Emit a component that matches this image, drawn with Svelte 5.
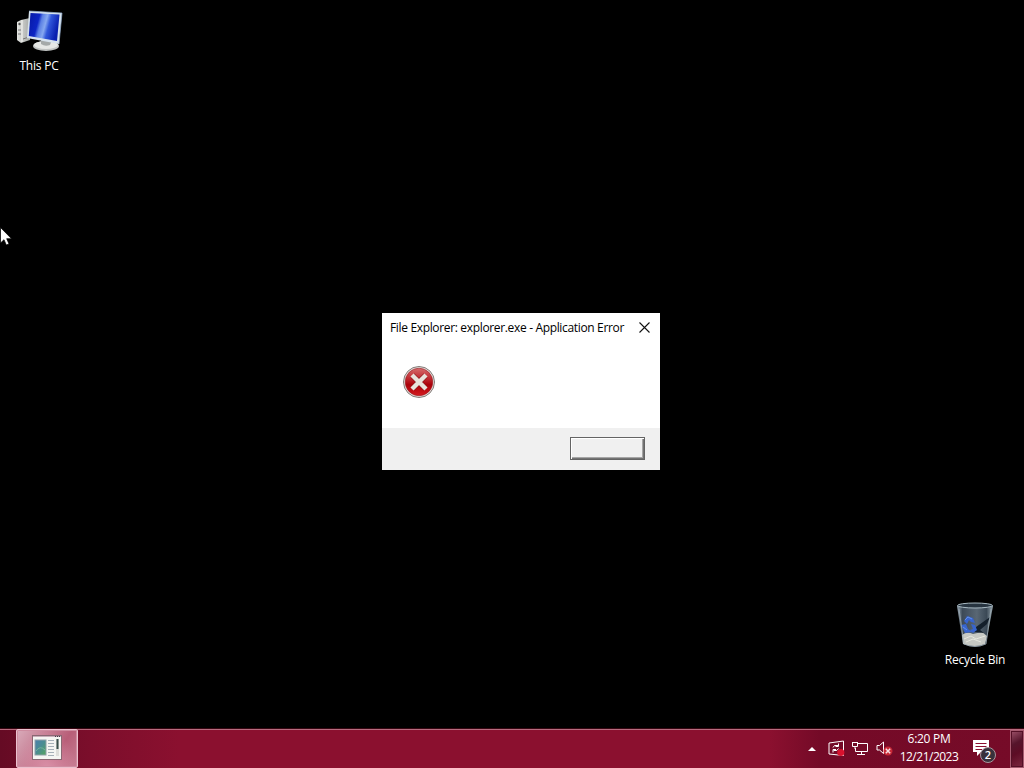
<script lang="ts">
	let dialogOpen = $state(true);

	const time = '6:20 PM';
	const date = '12/21/2023';
	const notifications = 2;
</script>

<main>
	<div class="desktop">
		<div class="shortcut pc">
			<svg width="48" height="44" viewBox="0 0 48 44">
				<defs>
					<linearGradient id="screen" x1="0" y1="0" x2="1" y2="0.25">
						<stop offset="0" stop-color="#0719a4" />
						<stop offset="0.35" stop-color="#0c25c4" />
						<stop offset="0.45" stop-color="#5b80e4" />
						<stop offset="0.6" stop-color="#86a8f0" />
						<stop offset="0.72" stop-color="#3157da" />
						<stop offset="1" stop-color="#0920b0" />
					</linearGradient>
					<linearGradient id="tower">
						<stop offset="0" stop-color="#e3e4e1" />
						<stop offset="1" stop-color="#a4a7a5" />
					</linearGradient>
				</defs>
				<path d="M2 14 L6 12 L15 10 V32 L6 35 L2 32Z" fill="url(#tower)" />
				<path d="M7 12 V34" stroke="#f8f8f5" />
				<path d="M3 22 L6 22 M3 26 L6 26 M8 31 L14 29" stroke="#777" />
				<circle cx="4.500" cy="16" r="1.200" fill="#555" />
				<ellipse cx="31" cy="38" rx="13" ry="5" fill="#bfc2c1" />
				<ellipse cx="31" cy="37" rx="12" ry="4" fill="#e5e7e5" />
				<path d="M26 31 L37 32 L35 37 Q30 39 26 36Z" fill="#a4a9a9" />
				<path d="M14 3 L47 5 L44 36 L12 30Z" fill="#d6e2ed" />
				<path d="M15.500 5 L44.500 6.500 L42 33 L13.800 28Z" fill="url(#screen)" />
				<path d="M14 3 L47 5 L44 36" fill="none" stroke="#91aacb" stroke-width="0.700" />
			</svg>
			<span>This PC</span>
		</div>

		<div class="shortcut bin">
			<svg width="48" height="48" viewBox="0 0 48 48">
				<defs>
					<linearGradient id="glass">
						<stop offset="0" stop-color="#9aa9b5" />
						<stop offset="0.15" stop-color="#3d4a58" />
						<stop offset="0.55" stop-color="#596774" />
						<stop offset="0.82" stop-color="#3b4956" />
						<stop offset="1" stop-color="#9aaab2" />
					</linearGradient>
				</defs>
				<path d="M6 5 L12 43 Q24 49 35 43 L42 5Z" fill="url(#glass)" />
				<path d="M11 34 Q16 30 22 33 L31 31 L36 35 L34 43 Q24 47 12 43Z" fill="#c7c9c4" />
				<path d="M13 38 L20 35 L25 38 L34 35 M15 41 L22 38 L30 41" fill="none" stroke="#e6e7df" />
				<path d="M25 26 L39 16 L36 23 L29 29 L33 32 L23 31Z" fill="#131f2b" />
				<path d="M13 20 L16 15 L22 17 L24 22 L20 21 L18 19 L16 23Z M10 24 L15 23 L17 28 L21 31 L14 32Z M20 23 L24 24 L26 29 L22 32 L19 29 L22 28Z" fill="#3764ce" />
				<path d="M14 19 L17 16 L21 18 M12 26 L16 29" fill="none" stroke="#6791e5" />
				<ellipse cx="24" cy="4.500" rx="17.500" ry="2.500" fill="#273440" stroke="#a9bac3" />
				<path d="M8 8 L13 43 Q24 48 35 43 L40 8" fill="none" stroke="#a5b1b9" stroke-width="0.700" />
			</svg>
			<span>Recycle Bin</span>
		</div>

		{#if dialogOpen}
			<section class="dialog">
				<header>
					<h1>File Explorer: explorer.exe - Application Error</h1>
					<button class="close" aria-label="Close" onclick={() => (dialogOpen = false)}>
						<svg width="11" height="11" viewBox="0 0 11 11">
							<path d="M.5 .5 L10.500 10.500 M10.500 .5 L.5 10.500" stroke="#111" stroke-width="1.100" />
						</svg>
					</button>
				</header>
				<div class="message">
					<svg width="34" height="34" viewBox="0 0 34 34">
						<defs>
							<linearGradient id="error" x1="0" y1="0" x2="0" y2="1">
								<stop offset="0" stop-color="#d56b6b" />
								<stop offset="0.42" stop-color="#bd2229" />
								<stop offset="0.6" stop-color="#aa0009" />
								<stop offset="1" stop-color="#d51b20" />
							</linearGradient>
						</defs>
						<circle cx="17" cy="17" r="15.500" fill="#e8e2df" stroke="#827b78" />
						<circle cx="17" cy="17" r="13.800" fill="url(#error)" stroke="#971a21" stroke-width="0.600" />
						<path d="M10.500 10.500 L23.500 23.500 M23.500 10.500 L10.500 23.500" stroke="#8e171b" stroke-width="5.600" />
						<path d="M10 10 L24 24 M24 10 L10 24" stroke="#e9e3dc" stroke-width="4.400" />
					</svg>
				</div>
				<footer>
					<button class="action" aria-label="OK" onclick={() => (dialogOpen = false)}></button>
				</footer>
			</section>
		{/if}

		<svg class="cursor" width="12" height="19" viewBox="0 0 12 19">
			<path d="M.5 .5 V16 L4 12.700 L6.300 18 L9 16.900 L6.700 11.700 H11.500Z" fill="#fff" stroke="#000" stroke-width="0.700" />
		</svg>
	</div>

	<div class="taskbar">
		<button class="task" aria-label="Application error">
			<svg width="30" height="25" viewBox="0 0 30 25">
				<defs>
					<linearGradient id="preview" x1="0" y1="0" x2="1" y2="1">
						<stop offset="0" stop-color="#4b80ad" />
						<stop offset="0.5" stop-color="#4a8c91" />
						<stop offset="1" stop-color="#56a65b" />
					</linearGradient>
				</defs>
				<rect x=".5" y=".5" width="29" height="24" fill="#f5f5f2" stroke="#8a6873" />
				<path d="M1 1.500 H29" stroke="#c8aeba" />
				<path d="M23 1.500 H24 M25 1.500 H26 M27 1.500 H28" stroke="#443c48" />
				<rect x="3" y="5" width="11" height="15" fill="url(#preview)" stroke="#8fa0a7" />
				<path d="M4 16 Q8 10 13 15" stroke="#73b39b" fill="none" />
				<path d="M16 5.500 H22 M16 8.500 H22 M16 11.500 H22 M16 14.500 H22 M16 17.500 H22 M16 20.500 H22" stroke="#a6b0b8" />
				<rect x="24" y="4" width="3" height="17" fill="#dededa" />
				<path d="M25.500 4 V14" stroke="#384e4b" stroke-width="2" />
			</svg>
		</button>

		<div class="tray">
			<svg class="arrow" width="8" height="4" viewBox="0 0 8 4">
				<path d="M0 4 L4 0 L8 4Z" fill="#fff" />
			</svg>
			<svg class="sync" width="17" height="17" viewBox="0 0 17 17" fill="none" stroke="#fff">
				<path d="M1 3 L15.500 1 V15.500 L1 14Z" />
				<path d="M5 7.500 Q5.500 4.500 10 5.500 M10.500 3.500 V6.500 H7.500 M10.500 8.500 Q9.500 11.500 5.500 10.500 M5 12.500 V9.500 H8" />
				<circle cx="12.800" cy="12.500" r="3.600" fill="#d8122e" stroke="none" />
			</svg>
			<svg class="network" width="17" height="15" viewBox="0 0 17 15" fill="none" stroke="#fff">
				<path d="M6 2.500 H15.500 V10.500 H3.500 V7 M9.500 11 V13.500 M5 13.500 H13" />
				<path d="M.5 1 V5.500 H5.500 V1 M0 1.500 H6 M3 5.500 V8" />
			</svg>
			<svg class="volume" width="17" height="15" viewBox="0 0 17 15">
				<path d="M1 4.500 H3.500 L7.500 1 V12.500 L3.500 9 H1Z" fill="none" stroke="#fff" />
				<circle cx="12" cy="10" r="4.500" fill="#c82837" />
				<path d="M9.800 7.800 L14.200 12.200 M14.200 7.800 L9.800 12.200" stroke="#f5dfe1" stroke-width="1.500" />
			</svg>
			<div class="clock"><span>{time}</span><span class="date">{date}</span></div>
			<div class="notifications">
				<svg width="17" height="17" viewBox="0 0 17 17">
					<path d="M0 0 H16 V12 H8 L4 16 V12 H0Z" fill="#fff" />
					<path d="M2.500 3.500 H13.500 M2.500 6.500 H13.500 M2.500 9.500 H9" stroke="#8b1030" />
				</svg>
				<span class="badge">{notifications}</span>
			</div>
			<button class="show-desktop" aria-label="Show desktop"></button>
		</div>
	</div>
</main>

<style>
	:global(body) {
		margin: 0;
		overflow: hidden;
		background: #000;
	}

	main {
		display: flex;
		flex-direction: column;
		width: 1024px;
		height: 768px;
		font-family: 'Open Sans', 'Noto Sans', sans-serif;
		font-size: 12px;
	}

	svg {
		display: block;
		flex-shrink: 0;
	}

	button {
		box-sizing: border-box;
		padding: 0;
	}

	.desktop {
		position: relative;
		flex: 1;
		background: #000;
	}

	/* Desktop icons */
	.shortcut {
		position: absolute;
		display: flex;
		flex-direction: column;
		align-items: center;
		width: 76px;
		color: #fff;
		line-height: 16px;
		letter-spacing: -0.2px;
		white-space: nowrap;
	}

	.pc {
		top: 8px;
		left: 1px;
	}

	.pc span {
		margin-top: 6px;
	}

	.bin {
		top: 601px;
		left: 937px;
	}

	.bin span {
		margin-top: 3px;
	}

	.cursor {
		position: absolute;
		top: 227px;
		left: 0;
	}

	/* Error window */
	.dialog {
		position: absolute;
		top: 313px;
		left: 382px;
		display: flex;
		flex-direction: column;
		width: 278px;
		height: 157px;
		background: #fff;
	}

	header {
		display: flex;
		align-items: center;
		justify-content: space-between;
		height: 29px;
		padding: 0 10px 0 8px;
	}

	h1 {
		margin: 0 0 1px;
		font-size: 12px;
		font-weight: 400;
		letter-spacing: -0.34px;
		white-space: nowrap;
	}

	.close {
		border: 0;
		background: none;
	}

	.message {
		flex: 1;
		padding: 23px 20px 0;
	}

	footer {
		display: flex;
		align-items: center;
		justify-content: flex-end;
		box-sizing: border-box;
		height: 42px;
		padding: 0 15px 2px;
		background: #f0f0f0;
	}

	.action {
		width: 75px;
		height: 23px;
		border: 1px solid #646464;
		background: #f0f0f0;
		box-shadow: inset 1px 1px #fff, inset -1px -1px #737373, inset -2px -2px #a5a5a5;
	}

	/* Taskbar */
	.taskbar {
		display: flex;
		justify-content: space-between;
		box-sizing: border-box;
		height: 40px;
		padding-left: 16px;
		border-top: 1px solid #350611;
		background: linear-gradient(90deg, #650b24 0, #7b0e2b 90px, #8b102f 180px, #8b102f 770px, #740a27 820px, #760b28 100%);
		box-shadow: inset 0 1px #b76b7e;
	}

	.task {
		display: flex;
		align-items: center;
		justify-content: center;
		width: 62px;
		height: 39px;
		border: 1px solid #ebc1ce;
		border-radius: 2px;
		background: radial-gradient(ellipse at 50% 110%, #dc94ab 0, transparent 70%), linear-gradient(125deg, #d9abba, #b85e78 65%, #c77e93);
		box-shadow: inset 0 0 0 1px #ce8ca0;
	}

	.task svg {
		margin-bottom: 3px;
	}

	.tray {
		display: flex;
		align-items: center;
		color: #fff;
	}

	.arrow {
		margin-right: 12px;
	}

	.sync {
		margin-right: 7px;
	}

	.network {
		margin-right: 7px;
	}

	.clock {
		display: flex;
		flex-direction: column;
		align-items: center;
		width: 72px;
		margin-bottom: 2px;
		line-height: 18px;
		letter-spacing: -0.3px;
	}

	.date {
		letter-spacing: -0.5px;
	}

	.notifications {
		position: relative;
		box-sizing: border-box;
		width: 45px;
		padding-left: 8px;
	}

	.badge {
		position: absolute;
		top: 7px;
		left: 15px;
		width: 14px;
		height: 14px;
		border: 1px solid #a8979d;
		border-radius: 50%;
		background: #39313b;
		font-size: 11px;
		font-weight: 600;
		line-height: 14px;
		text-align: center;
	}

	.show-desktop {
		align-self: stretch;
		width: 14px;
		margin-top: 1px;
		border: 1px solid #a75b70;
		background: linear-gradient(150deg, #9e526a 0, #55152b 35%, #5d0c25 60%, #7c2840);
		box-shadow: inset 0 0 0 1px #541026;
	}
</style>
